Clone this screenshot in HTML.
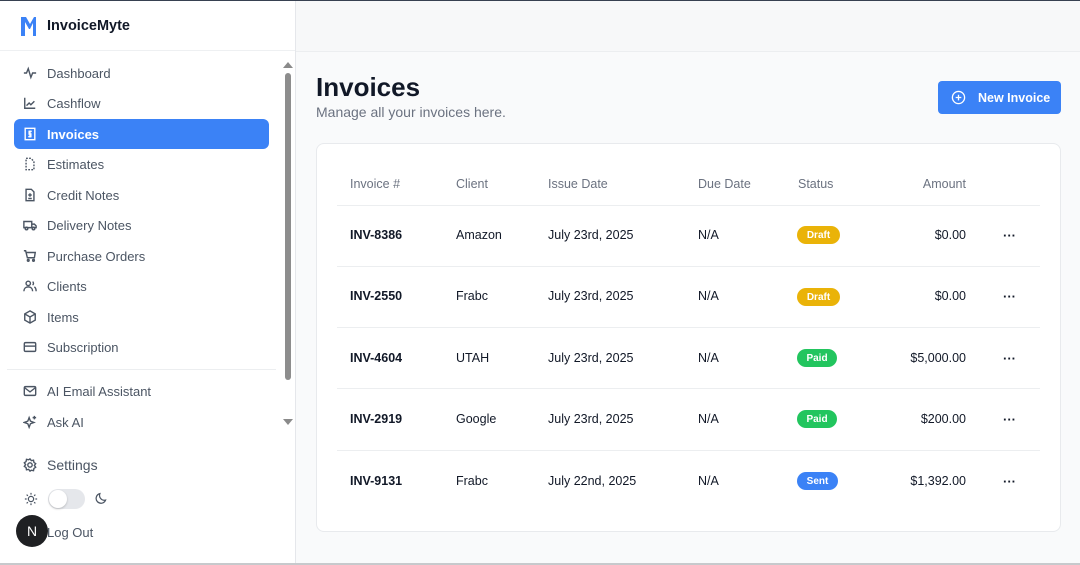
<!DOCTYPE html>
<html><head><style>
*{box-sizing:border-box;margin:0;padding:0}
body{width:1080px;height:565px;overflow:hidden;font-family:"Liberation Sans",sans-serif;background:#f9fafb;position:relative;color:#111827}
.topline{position:absolute;left:0;top:0;width:1080px;height:1px;background:#374151}
.botline{position:absolute;left:0;top:563px;width:1080px;height:2px;background:#c7c9cc}
.side{position:absolute;left:0;top:1px;width:296px;height:562px;background:#fff;border-right:1px solid #e5e7eb}
.brand{height:50px;border-bottom:1px solid #eef0f2;display:flex;align-items:center;padding-left:20px;font-weight:bold;font-size:14.5px}
.nav{position:absolute;left:14px;width:255px;height:30px;display:flex;align-items:center;padding-left:9px;font-size:13px;color:#4b5563;border-radius:6px}
.nav svg{width:14px;height:14px;margin-right:10px;stroke:#4b5563;fill:none;stroke-width:1.6}
.nav.act{background:#3b82f6;color:#fff;font-weight:600}
.nav.act svg{stroke:#fff}
.sb{position:absolute;left:285px;top:73px;width:6px;height:307px;background:#8d8d8d;border-radius:3px}
.main-top{position:absolute;left:296px;top:1px;right:0;height:51px;border-bottom:1px solid #eceef0;background:#f7f8f9}
h1{position:absolute;left:316px;top:72px;font-size:26px;font-weight:bold}
.sub{position:absolute;left:316px;top:104px;font-size:14px;color:#6b7280}
.btn{position:absolute;left:938px;top:81px;width:123px;height:33px;background:#3b82f6;border-radius:4px;color:#fff;font-size:12.5px;font-weight:600;display:flex;align-items:center;padding-left:13px}
.card{position:absolute;left:316px;top:143px;width:745px;height:389px;background:#fff;border:1px solid #e8eaed;border-radius:8px}
.c{position:absolute;font-size:12.5px}
.hd{color:#6b7280;top:177px}
.line{position:absolute;left:337px;width:703px;height:1px;background:#eceef0}
.badge{position:absolute;left:797px;height:18px;border-radius:9px;color:#fff;font-size:10px;font-weight:bold;display:flex;align-items:center;justify-content:center}
.dots{position:absolute;left:1003px;font-weight:bold;font-size:13px;letter-spacing:0}
.arr{position:absolute;left:283px;width:0;height:0;border-left:5px solid transparent;border-right:5px solid transparent}
</style></head><body>
<div class="topline"></div>
<div class="side">
<div class="brand"><svg width="21" height="20" viewBox="0 0 21 20" style="margin-right:6px"><path d="M1 1h5l4 7 4-7h2v19h-3V7l-3 6h-1L5 6v14H1z" fill="#3b82f6"/></svg>InvoiceMyte</div>
</div>
<div class="nav" style="top:58px"><svg viewBox="0 0 16 16"><path d="M1 8h3l2-5 3 10 2-5h4"/></svg>Dashboard</div>
<div class="nav" style="top:88px"><svg viewBox="0 0 16 16"><path d="M2 2v12h12M4 11l3-3 2 2 4-4"/></svg>Cashflow</div>
<div class="nav act" style="top:119px"><svg viewBox="0 0 16 16"><rect x="2.5" y="1.5" width="11" height="13"/><path d="M10 5H7v3h2v3H6M8 4v8"/></svg>Invoices</div>
<div class="nav" style="top:149px"><svg viewBox="0 0 16 16"><path d="M9 1.5H3.5v13h9V5z" stroke-dasharray="2 1.5"/></svg>Estimates</div>
<div class="nav" style="top:180px"><svg viewBox="0 0 16 16"><path d="M9.5 1.5h-6v13h9v-10z M8 6v4M6 8h4M6 12h4"/></svg>Credit Notes</div>
<div class="nav" style="top:210px"><svg viewBox="0 0 16 16"><path d="M1 4h9v7H1zM10 7h3l2 2v2h-5"/><circle cx="4" cy="12" r="1.5"/><circle cx="12" cy="12" r="1.5"/></svg>Delivery Notes</div>
<div class="nav" style="top:241px"><svg viewBox="0 0 16 16"><path d="M1 2h2l2 8h8l1-6H4"/><circle cx="6" cy="13" r="1"/><circle cx="12" cy="13" r="1"/></svg>Purchase Orders</div>
<div class="nav" style="top:271px"><svg viewBox="0 0 16 16"><circle cx="6" cy="5" r="2.5"/><path d="M1 14c0-3 2-5 5-5s5 2 5 5M11 3a2.5 2.5 0 010 4M13 9c1.5 1 2 3 2 5"/></svg>Clients</div>
<div class="nav" style="top:302px"><svg viewBox="0 0 16 16"><path d="M8 1l6 3.5v7L8 15l-6-3.5v-7zM2 4.5L8 8l6-3.5M8 8v7"/></svg>Items</div>
<div class="nav" style="top:332px"><svg viewBox="0 0 16 16"><rect x="1.5" y="3" width="13" height="10" rx="1.5"/><path d="M1.5 7h13"/></svg>Subscription</div>
<div style="position:absolute;left:7px;top:369px;width:269px;height:1px;background:#eceef0"></div>
<div class="nav" style="top:376px"><svg viewBox="0 0 16 16"><rect x="1.5" y="3" width="13" height="10" rx="1.5"/><path d="M1.5 4l6.5 5 6.5-5"/></svg>AI Email Assistant</div>
<div class="nav" style="top:407px"><svg viewBox="0 0 16 16"><path d="M7 3l1.5 4 4 1.5-4 1.5L7 14l-1.5-4-4-1.5 4-1.5zM13 1v4M11 3h4"/></svg>Ask AI</div>
<div class="nav" style="top:450px;font-size:14px"><svg viewBox="0 0 16 16"><circle cx="8" cy="8" r="2.5"/><path d="M8 1l1.5 2 2.5-.5.5 2.5 2 1.5-1.5 2 1.5 2-2 1.5-.5 2.5-2.5-.5L8 15l-1.5-2-2.5.5-.5-2.5-2-1.5 1.5-2-1.5-2 2-1.5.5-2.5 2.5.5z"/></svg>Settings</div>
<svg style="position:absolute;left:24px;top:492px" width="14" height="14" viewBox="0 0 16 16" fill="none" stroke="#4b5563" stroke-width="1.4"><circle cx="8" cy="8" r="3"/><path d="M8 1v2M8 13v2M1 8h2M13 8h2M3 3l1.4 1.4M11.6 11.6L13 13M3 13l1.4-1.4M11.6 4.4L13 3"/></svg>
<div style="position:absolute;left:48px;top:489px;width:37px;height:20px;border-radius:10px;background:#e5e7eb"><div style="position:absolute;left:1px;top:1px;width:18px;height:18px;border-radius:9px;background:#fff;box-shadow:0 1px 2px rgba(0,0,0,.2)"></div></div>
<svg style="position:absolute;left:95px;top:492px" width="13" height="13" viewBox="0 0 16 16" fill="none" stroke="#4b5563" stroke-width="1.5"><path d="M13 10A6 6 0 016 2a6 6 0 107 8z"/></svg>
<div style="position:absolute;left:47px;top:525px;font-size:13px;color:#4b5563">Log Out</div>
<div style="position:absolute;left:16px;top:515px;width:32px;height:32px;border-radius:16px;background:#1f2023;color:#fff;font-size:14px;display:flex;align-items:center;justify-content:center">N</div>
<div class="arr" style="top:62px;border-bottom:6px solid #8a8a8a"></div>
<div class="sb"></div>
<div class="arr" style="top:419px;border-top:6px solid #8a8a8a"></div>
<div class="main-top"></div>
<h1>Invoices</h1>
<div class="sub">Manage all your invoices here.</div>
<div class="btn"><svg width="15" height="15" viewBox="0 0 16 16" fill="none" stroke="#fff" stroke-width="1.4" style="margin-right:12px"><circle cx="8" cy="8" r="6.5"/><path d="M8 5v6M5 8h6"/></svg>New Invoice</div>
<div class="card"></div>
<div class="c hd" style="left:350px">Invoice #</div>
<div class="c hd" style="left:456px">Client</div>
<div class="c hd" style="left:548px">Issue Date</div>
<div class="c hd" style="left:698px">Due Date</div>
<div class="c hd" style="left:798px">Status</div>
<div class="c hd" style="left:900px;width:66px;text-align:right">Amount</div>
<div class="line" style="top:205px"></div>
<div class="line" style="top:266px"></div>
<div class="line" style="top:327px"></div>
<div class="line" style="top:388px"></div>
<div class="line" style="top:450px"></div>

<div class="c" style="left:350px;top:228px;font-weight:600">INV-8386</div><div class="c" style="left:456px;top:228px">Amazon</div><div class="c" style="left:548px;top:228px">July 23rd, 2025</div><div class="c" style="left:698px;top:228px">N/A</div><div class="badge" style="top:226px;width:43px;background:#eab308">Draft</div><div class="c" style="left:880px;width:86px;text-align:right;top:228px">$0.00</div><div class="dots" style="top:228px">···</div>

<div class="c" style="left:350px;top:289px;font-weight:600">INV-2550</div><div class="c" style="left:456px;top:289px">Frabc</div><div class="c" style="left:548px;top:289px">July 23rd, 2025</div><div class="c" style="left:698px;top:289px">N/A</div><div class="badge" style="top:288px;width:43px;background:#eab308">Draft</div><div class="c" style="left:880px;width:86px;text-align:right;top:289px">$0.00</div><div class="dots" style="top:289px">···</div>

<div class="c" style="left:350px;top:351px;font-weight:600">INV-4604</div><div class="c" style="left:456px;top:351px">UTAH</div><div class="c" style="left:548px;top:351px">July 23rd, 2025</div><div class="c" style="left:698px;top:351px">N/A</div><div class="badge" style="top:349px;width:40px;background:#22c55e">Paid</div><div class="c" style="left:880px;width:86px;text-align:right;top:351px">$5,000.00</div><div class="dots" style="top:351px">···</div>

<div class="c" style="left:350px;top:412px;font-weight:600">INV-2919</div><div class="c" style="left:456px;top:412px">Google</div><div class="c" style="left:548px;top:412px">July 23rd, 2025</div><div class="c" style="left:698px;top:412px">N/A</div><div class="badge" style="top:410px;width:40px;background:#22c55e">Paid</div><div class="c" style="left:880px;width:86px;text-align:right;top:412px">$200.00</div><div class="dots" style="top:412px">···</div>

<div class="c" style="left:350px;top:474px;font-weight:600">INV-9131</div><div class="c" style="left:456px;top:474px">Frabc</div><div class="c" style="left:548px;top:474px">July 22nd, 2025</div><div class="c" style="left:698px;top:474px">N/A</div><div class="badge" style="top:472px;width:41px;background:#3b82f6">Sent</div><div class="c" style="left:880px;width:86px;text-align:right;top:474px">$1,392.00</div><div class="dots" style="top:474px">···</div>
<div class="botline"></div>
</body></html>
